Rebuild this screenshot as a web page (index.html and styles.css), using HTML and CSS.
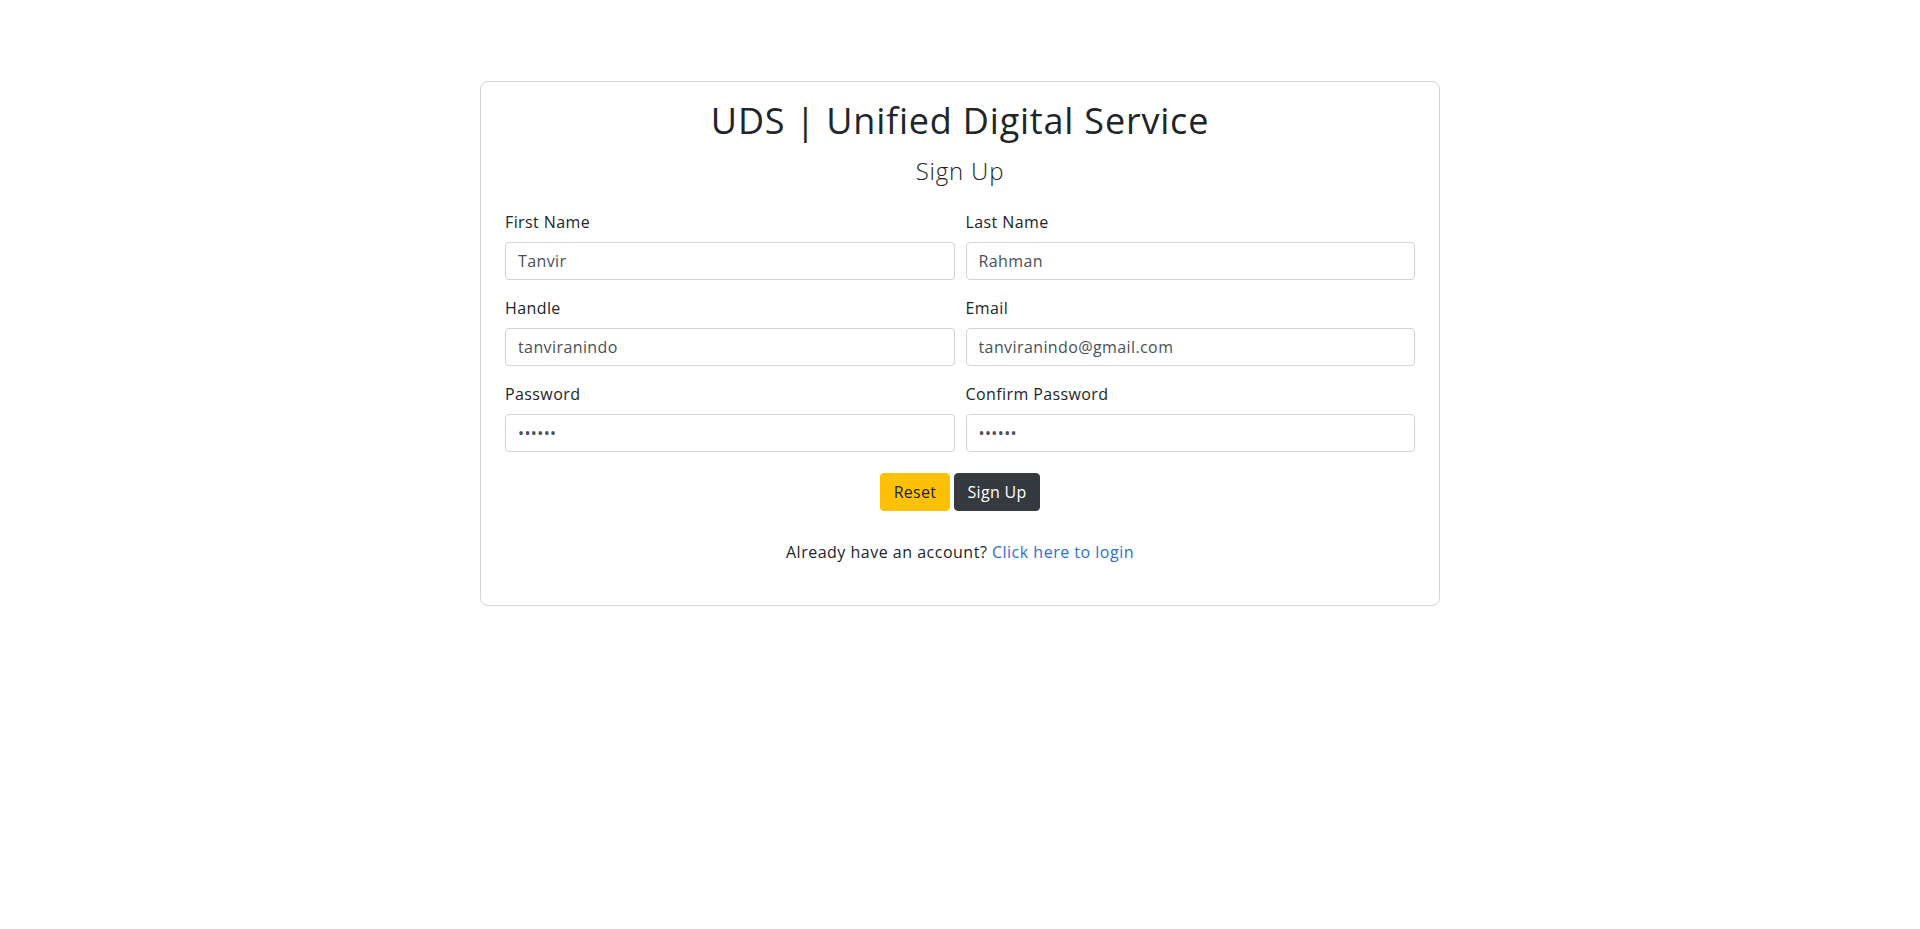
FILE: index.html
```html
<!DOCTYPE html>
<html lang="en">
<head>
<meta charset="utf-8">
<title>UDS | Sign Up</title>
<link rel="stylesheet" href="styles.css">
</head>
<body>
<main class="page">
  <section class="card">
    <h1 class="title">UDS | Unified Digital Service</h1>
    <h2 class="subtitle">Sign Up</h2>
    <form class="form">
      <div class="grid">
        <div class="field">
          <label class="label" for="fn">First Name</label>
          <input class="input" id="fn" type="text" value="Tanvir">
        </div>
        <div class="field">
          <label class="label" for="ln">Last Name</label>
          <input class="input" id="ln" type="text" value="Rahman">
        </div>
        <div class="field">
          <label class="label" for="hd">Handle</label>
          <input class="input" id="hd" type="text" value="tanviranindo">
        </div>
        <div class="field">
          <label class="label" for="em">Email</label>
          <input class="input" id="em" type="email" value="tanviranindo@gmail.com">
        </div>
        <div class="field">
          <label class="label" for="pw">Password</label>
          <input class="input" id="pw" type="password" value="123456">
        </div>
        <div class="field">
          <label class="label" for="cpw">Confirm Password</label>
          <input class="input" id="cpw" type="password" value="123456">
        </div>
      </div>
      <div class="actions">
        <button type="reset" class="btn btn-reset">Reset</button>
        <button type="button" class="btn btn-dark">Sign Up</button>
      </div>
    </form>
    <p class="footer">Already have an account? <a class="link" href="#">Click here to login</a></p>
  </section>
</main>
</body>
</html>
```
FILE: styles.css
```css
* { box-sizing: border-box; }
html, body { margin: 0; padding: 0; background: #fff; }
body {
  font-family: "Open Sans", "Noto Sans", sans-serif;
  font-size: 16px;
  line-height: 1.5;
  color: #212529;
}
.page {
  display: flex;
  justify-content: center;
  padding-top: 81px;
}
.card {
  width: 960px;
  border: 1px solid #d3d3d3;
  border-radius: 8px;
  padding: 17px 24px 41px;
  display: flex;
  flex-direction: column;
}
.title {
  margin: 0;
  text-align: center;
  font-family: "Open Sans", sans-serif;
  font-weight: 400;
  font-size: 36px;
  letter-spacing: 0.8px;
  line-height: 44px;
  color: #212529;
}
.subtitle {
  margin: 10px 0 0;
  text-align: center;
  font-weight: 300;
  font-size: 24px;
  letter-spacing: 0.8px;
  line-height: 36px;
  color: #212529;
}
.form { margin-top: 21px; }
.grid {
  display: grid;
  grid-template-columns: 1fr 1fr;
  column-gap: 11px;
  row-gap: 16px;
}
.field { display: flex; flex-direction: column; }
.label {
  font-size: 16px;
  letter-spacing: 0.4px;
  line-height: 24px;
  margin-bottom: 8px;
  color: #212529;
}
.input {
  width: 100%;
  height: 38px;
  padding: 6px 12px;
  border: 1px solid #ced4da;
  border-radius: 4px;
  font-family: inherit;
  font-size: 16px;
  letter-spacing: 0.4px;
  line-height: 24px;
  color: #495057;
  background: #fff;
}
.actions {
  display: flex;
  justify-content: center;
  gap: 4px;
  margin-top: 21px;
}
.btn {
  height: 38px;
  padding: 6px 0;
  border: 1px solid transparent;
  border-radius: 4px;
  font-family: inherit;
  font-size: 16px;
  letter-spacing: 0.3px;
  line-height: 24px;
  cursor: pointer;
}
.btn-reset { background: #ffc107; border-color: #ffc107; color: #212529; width: 70px; }
.btn-dark { background: #343a40; border-color: #343a40; color: #fff; font-weight: 500; width: 86px; }
.footer {
  margin: 29px 0 0;
  text-align: center;
  font-size: 16px;
  letter-spacing: 0.5px;
  line-height: 24px;
}
.link { color: #2c6fd6; text-decoration: none; }
```
